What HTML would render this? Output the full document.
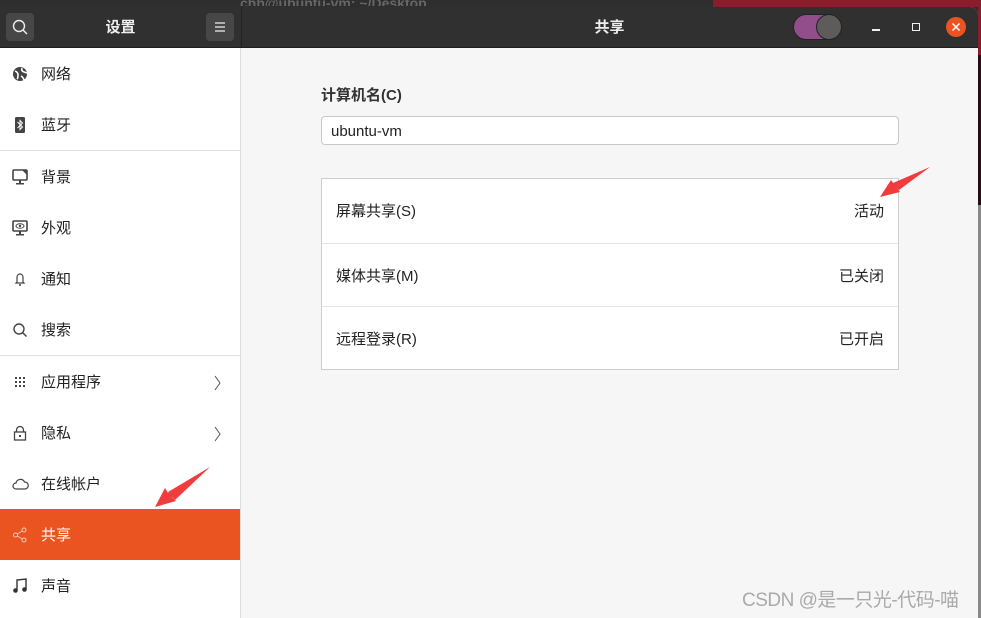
<!DOCTYPE html>
<html><head><meta charset="utf-8"><style>
*{margin:0;padding:0;box-sizing:border-box}
body{width:981px;height:618px;overflow:hidden;position:relative;background:#2c2c2c;font-family:"Liberation Sans","Noto Sans CJK SC",sans-serif;}
.abs{position:absolute}
#strip{left:0;top:0;width:981px;height:7px;background:#2e2e2e}
#redr{left:713px;top:0;width:268px;height:7px;background:#8c1c2c}
#edge{left:978px;top:0;width:3px;height:618px;background:#888}
#win{left:0;top:7px;width:978px;height:611px;background:#f6f6f6;border-top-right-radius:8px;overflow:hidden}
#hdr{left:0;top:0;width:978px;height:41px;background:#303030;border-bottom:1px solid #1e1e1e}
.btn{width:28px;height:28px;background:#474747;border-radius:4px;top:6px}
#side{left:0;top:41px;width:241px;height:570px;background:#fff;border-right:1px solid #dcdcdc}
.row{position:absolute;left:0;width:240px;height:51px;font-size:15px;color:#222;line-height:53px;padding-left:41px}
.row svg{position:absolute;left:12px;top:18px}
.sep{position:absolute;left:0;width:240px;height:1px;background:#e0e0e0}
.sel{background:#e95420;color:#fff}
.chev{position:absolute;right:18px;top:0;color:#555;font-size:14px}
.lbl{font-size:15px;font-weight:bold;color:#333}
#inp{left:321px;top:109px;width:578px;height:29px;background:#fff;border:1px solid #c8c8c8;border-radius:4px;font-size:15px;line-height:29px;padding-left:9px;color:#222}
#list{left:321px;top:171px;width:578px;height:192px;background:#fff;border:1px solid #cfcfcf}
.li{position:absolute;left:0;width:576px;height:64px;line-height:66px;font-size:15px;color:#222;padding:0 14px}
.li span{float:right}
.li+.li{border-top:1px solid #e4e4e4}
</style></head><body>
<div class="abs" id="strip"></div>
<div class="abs" id="redr"></div>
<div class="abs" style="left:240px;top:0;font-size:14px;color:#666;font-weight:bold;line-height:6px;overflow:hidden;height:6px">chh@ubuntu-vm: ~/Desktop</div>
<div class="abs" id="edge"></div>
<div class="abs" style="left:978px;top:0;width:3px;height:55px;background:#8c1c2c"></div>
<div class="abs" style="left:978px;top:55px;width:3px;height:150px;background:#2a0a14"></div>
<div class="abs" id="win">
 <div class="abs" id="hdr">
  <div class="abs btn" style="left:6px"><svg width="28" height="28"><circle cx="13" cy="13" r="5.5" fill="none" stroke="#eee" stroke-width="1.4"/><line x1="17" y1="17" x2="21" y2="21" stroke="#eee" stroke-width="1.5"/></svg></div>
  <div class="abs" style="left:0;width:241px;top:0;line-height:41px;text-align:center;color:#eee;font-size:15px;font-weight:bold">设置</div>
  <div class="abs btn" style="left:206px"><svg width="28" height="28"><path d="M9 10h10M9 14h10M9 18h10" stroke="#eee" stroke-width="1.3"/></svg></div>
  <div class="abs" style="left:241px;top:0;width:1px;height:41px;background:#222"></div>
  <div class="abs" style="left:241px;width:737px;top:0;line-height:41px;text-align:center;color:#eee;font-size:15px;font-weight:bold">共享</div>
  <div class="abs" style="left:793px;top:7px;width:48px;height:26px;border-radius:13px;background:#924d8b;border:1px solid #222"></div>
  <div class="abs" style="left:816px;top:7px;width:26px;height:26px;border-radius:13px;background:#5e5c5b;border:1px solid #222"></div>
  <div class="abs" style="left:872px;top:22px;width:8px;height:1.5px;background:#eee"></div>
  <div class="abs" style="left:912px;top:16px;width:8px;height:8px;border:1.5px solid #eee"></div>
  <div class="abs" style="left:946px;top:10px;width:20px;height:20px;border-radius:10px;background:#e95420"><svg width="20" height="20"><path d="M6.5 6.5l7 7M13.5 6.5l-7 7" stroke="#fff" stroke-width="1.5"/></svg></div>
 </div>
 <div class="abs" id="side">
  <div class="row" style="top:0"><svg width="16" height="16"><circle cx="8" cy="8" r="7" fill="#444"/><path d="M3 5q3 1 3 4t-1 4M10 2q-1 3 2 4t3 1M9 10q2 1 3 4" stroke="#fff" stroke-width="1.6" fill="none"/></svg>网络</div>
  <div class="row" style="top:51px"><svg width="16" height="16"><rect x="3" y="0" width="10" height="16" rx="1.5" fill="#444"/><path d="M5.5 5l5 5-2.5 2.5v-9l2.5 2.5-5 5" stroke="#fff" stroke-width="1" fill="none"/></svg>蓝牙</div>
  <div class="sep" style="top:102px"></div>
  <div class="row" style="top:103px"><svg width="16" height="16"><rect x="1" y="1" width="14" height="10" rx="1" fill="none" stroke="#444" stroke-width="1.6"/><path d="M10 1h5v5z" fill="#444"/><rect x="7" y="11" width="2" height="3" fill="#444"/><rect x="4" y="14" width="8" height="1.5" fill="#444"/></svg>背景</div>
  <div class="row" style="top:154px"><svg width="16" height="16"><rect x="1" y="1" width="14" height="10" rx="1" fill="none" stroke="#444" stroke-width="1.6"/><ellipse cx="8" cy="6" rx="4" ry="2.3" fill="none" stroke="#444"/><circle cx="8" cy="6" r="1.2" fill="#444"/><rect x="7" y="11" width="2" height="3" fill="#444"/><rect x="4" y="14" width="8" height="1.5" fill="#444"/></svg>外观</div>
  <div class="row" style="top:205px"><svg width="16" height="16"><path d="M5 11V6a3 3 0 0 1 6 0v5l1 1H4z" fill="none" stroke="#444" stroke-width="1.2"/><path d="M7 14h2" stroke="#444" stroke-width="1.5"/></svg>通知</div>
  <div class="row" style="top:256px"><svg width="16" height="16"><circle cx="7" cy="7" r="5" fill="none" stroke="#444" stroke-width="1.4"/><line x1="10.5" y1="10.5" x2="14.5" y2="14.5" stroke="#444" stroke-width="1.5"/></svg>搜索</div>
  <div class="sep" style="top:307px"></div>
  <div class="row" style="top:308px"><svg width="16" height="16" fill="#444"><rect x="3" y="3" width="2" height="2"/><rect x="7" y="3" width="2" height="2"/><rect x="11" y="3" width="2" height="2"/><rect x="3" y="7" width="2" height="2"/><rect x="7" y="7" width="2" height="2"/><rect x="11" y="7" width="2" height="2"/><rect x="3" y="11" width="2" height="2"/><rect x="7" y="11" width="2" height="2"/><rect x="11" y="11" width="2" height="2"/></svg>应用程序<span class="chev"><svg width="8" height="16" style="position:static;vertical-align:middle"><path d="M1 1l5 7-5 7" stroke="#555" fill="none"/></svg></span></div>
  <div class="row" style="top:359px"><svg width="16" height="16"><path d="M4.5 7V5a3.5 3.5 0 0 1 7 0v2" fill="none" stroke="#444" stroke-width="1.3"/><rect x="2.5" y="7" width="11" height="8" fill="none" stroke="#444" stroke-width="1.3"/><rect x="7" y="10" width="2" height="2" fill="#444"/></svg>隐私<span class="chev"><svg width="8" height="16" style="position:static;vertical-align:middle"><path d="M1 1l5 7-5 7" stroke="#555" fill="none"/></svg></span></div>
  <div class="row" style="top:410px"><svg width="17" height="16"><path d="M4 13a3 3 0 0 1 0-6 4.5 4.5 0 0 1 8.5-1 3.5 3.5 0 0 1 0.5 7z" fill="none" stroke="#444" stroke-width="1.2"/></svg>在线帐户</div>
  <div class="row sel" style="top:461px"><svg width="16" height="16"><circle cx="3.5" cy="8" r="2" fill="none" stroke="#f8c8b4"/><circle cx="12" cy="3" r="2" fill="none" stroke="#f8c8b4"/><circle cx="12" cy="13" r="2" fill="none" stroke="#f8c8b4"/><path d="M5.3 7l5-3M5.3 9l5 3" stroke="#f8c8b4"/></svg>共享</div>
  <div class="row" style="top:512px"><svg width="16" height="16"><path d="M5 12V2l9-1v10" fill="none" stroke="#333" stroke-width="1.4"/><circle cx="3.5" cy="12.5" r="2.3" fill="#333"/><circle cx="12.5" cy="11.5" r="2.3" fill="#333"/></svg>声音</div>
 </div>
 <div class="abs lbl" style="left:321px;top:77px">计算机名(C)</div>
 <div class="abs" id="inp">ubuntu-vm</div>
 <div class="abs" id="list">
  <div class="li" style="top:0">屏幕共享(S)<span>活动</span></div>
  <div class="li" style="top:64px">媒体共享(M)<span>已关闭</span></div>
  <div class="li" style="top:127px">远程登录(R)<span>已开启</span></div>
 </div>
 <div class="abs" style="left:742px;top:578px;font-size:19px;color:#aaa;letter-spacing:-0.5px">CSDN @是一只光-代码-喵</div>
</div>
<svg class="abs" style="left:0;top:0" width="981" height="618">
 <path d="M930 167L896 186L900 192L880 197L891 180L894 184Z" fill="#f03c3c"/>
 <path d="M930 167L899 190L893 183Z" fill="#f03c3c"/>
 <path d="M210 467L172 497L176 501L155 507L165 488L168 493Z" fill="#f03c3c"/>
 <path d="M210 467L175 500L168 492Z" fill="#f03c3c"/>
</svg>
</body></html>
